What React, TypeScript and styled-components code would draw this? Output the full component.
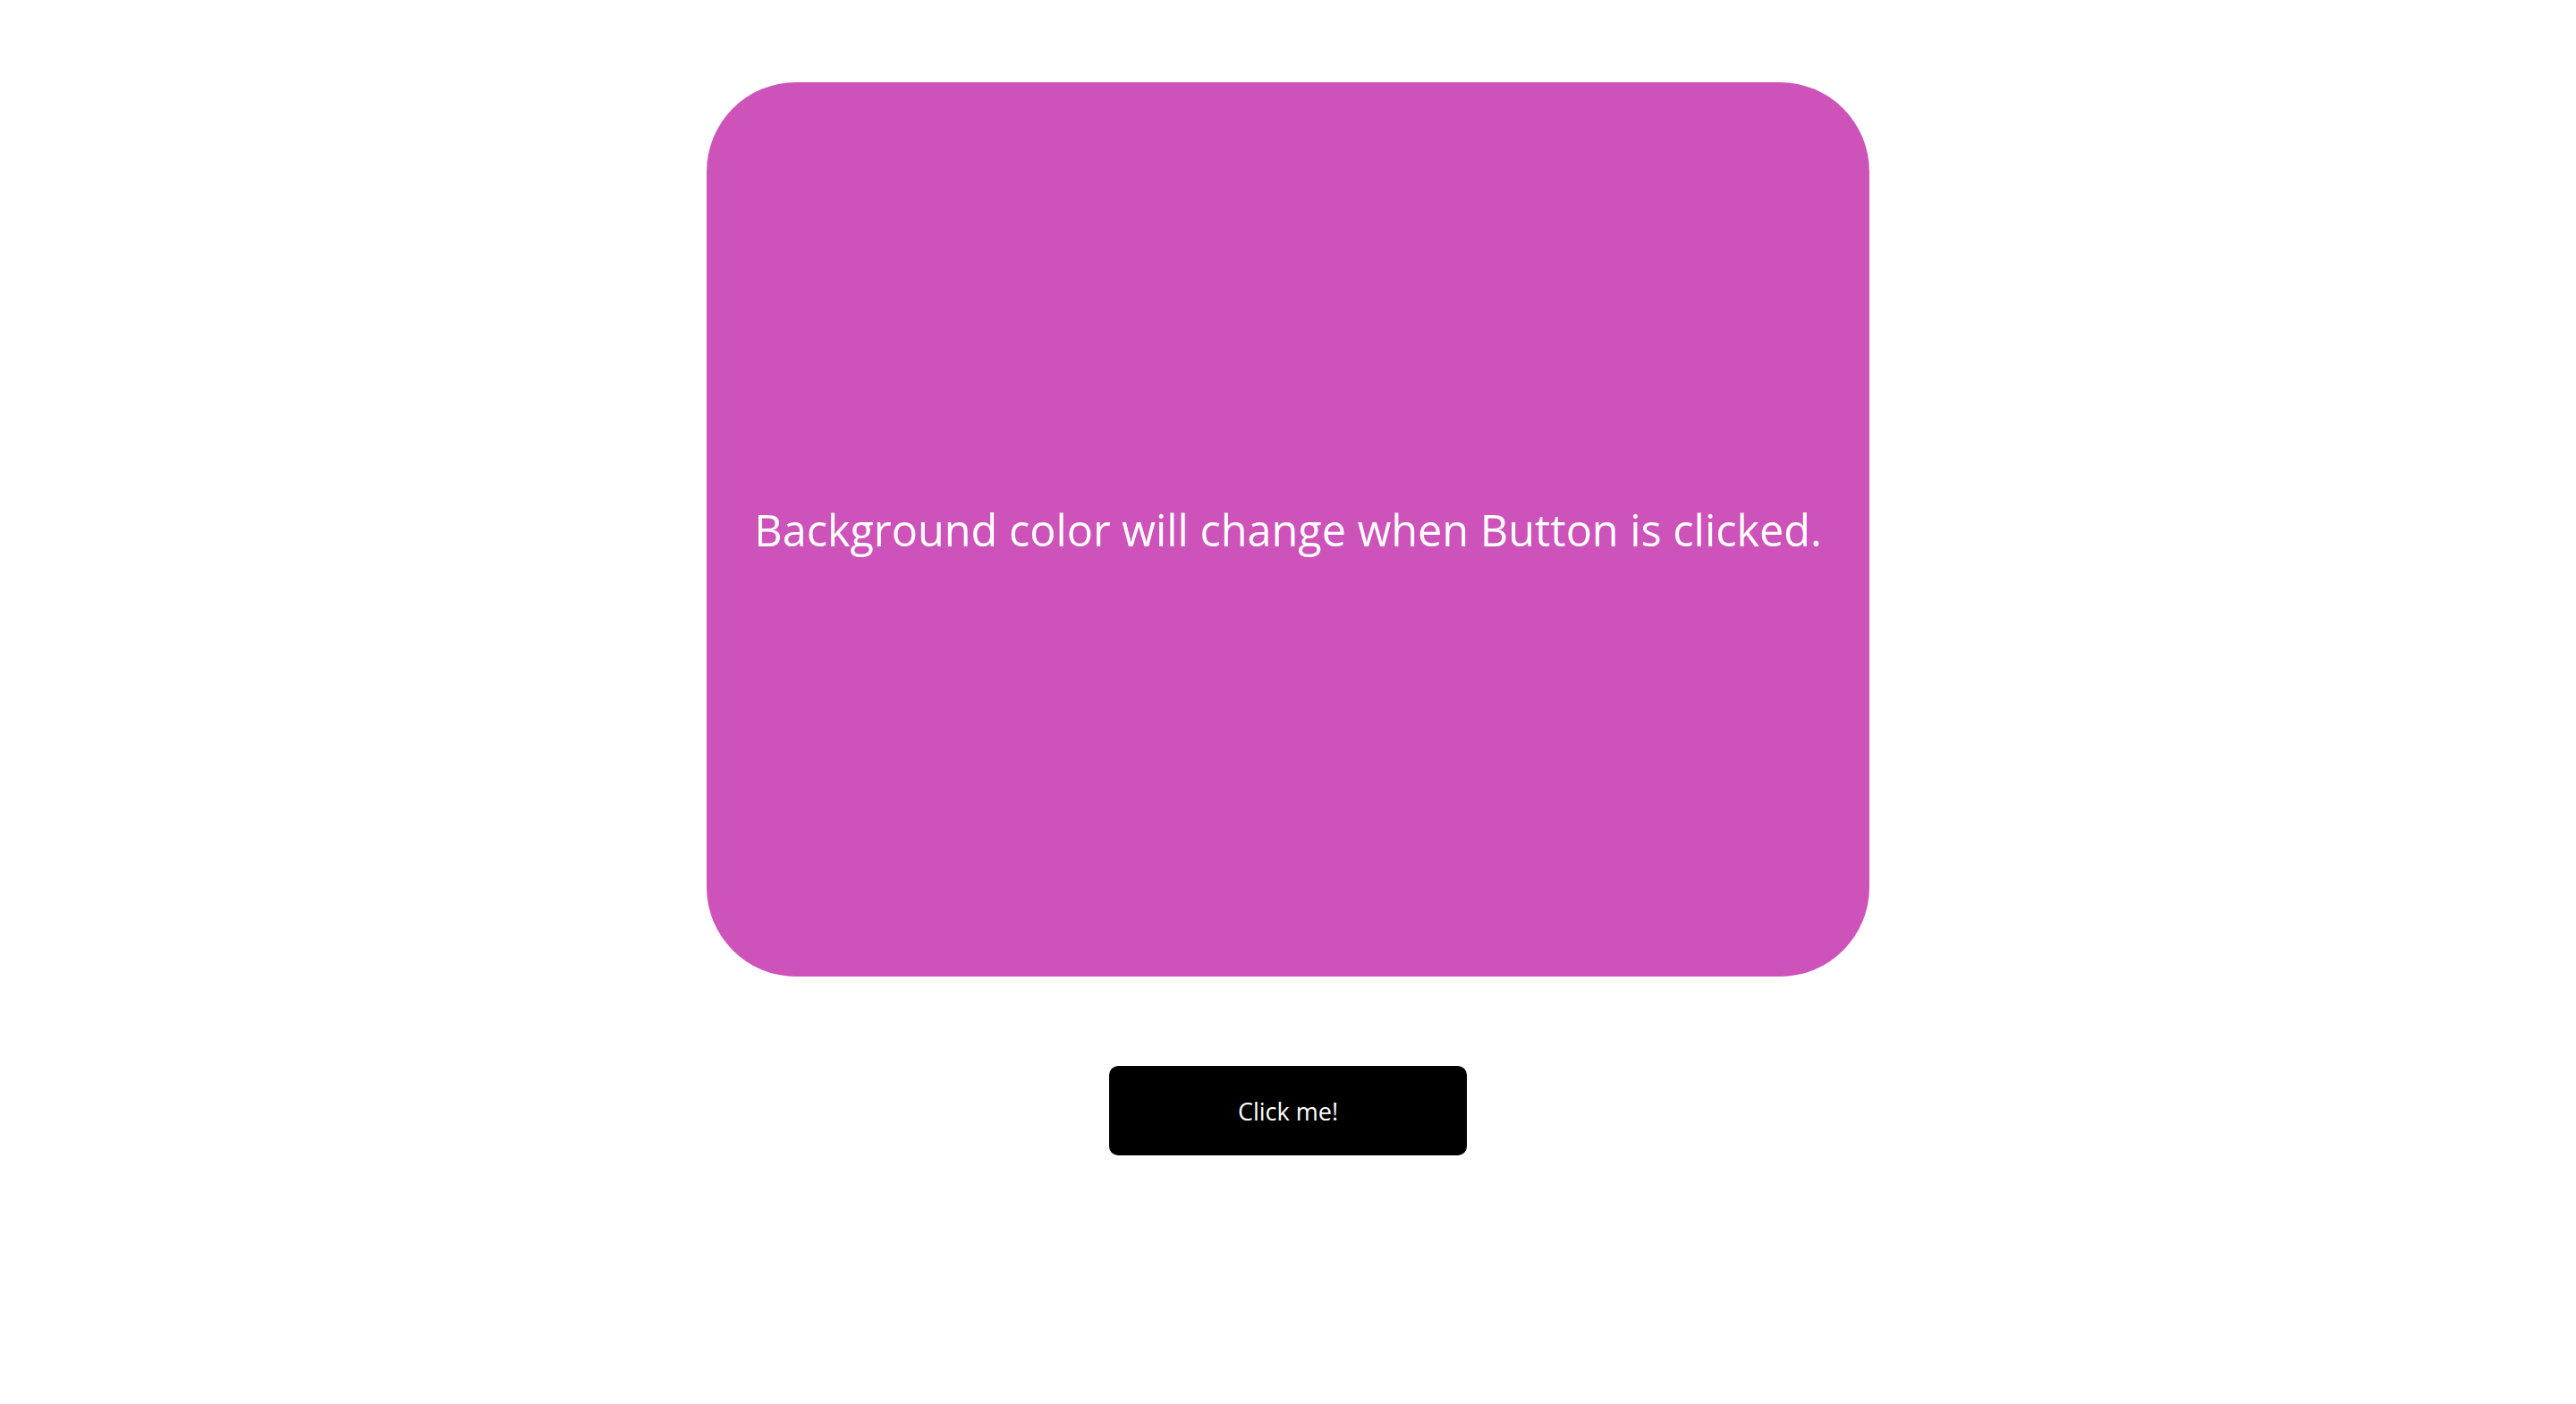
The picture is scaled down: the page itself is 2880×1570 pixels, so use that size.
import React, { useState } from "react";
import styled, { createGlobalStyle } from "styled-components";

const Global = createGlobalStyle`
  html, body { margin: 0; padding: 0; background: #ffffff; }
  body { font-family: "Open Sans", "DejaVu Sans", sans-serif; }
`;

const Page = styled.main`
  display: flex;
  flex-direction: column;
  align-items: center;
  gap: 100px;
  padding-top: 92px;
`;

const Card = styled.section<{ $bg: string }>`
  width: 1300px;
  height: 1000px;
  border-radius: 100px;
  background: ${(p) => p.$bg};
  display: flex;
  align-items: center;
  justify-content: center;
`;

const Message = styled.h1`
  margin: 0;
  color: #ffffff;
  font-family: "Open Sans", sans-serif;
  font-weight: 400;
  font-size: 48.6px;
  letter-spacing: 0;
`;

const Button = styled.button`
  width: 400px;
  height: 100px;
  border: none;
  border-radius: 10px;
  background: #000000;
  color: #ffffff;
  font-family: "Open Sans", sans-serif;
  font-weight: 400;
  font-size: 27px;
  cursor: pointer;
`;

const colors = ["#cd53bb", "#3b82f6", "#10b981", "#f59e0b", "#ef4444"];

export default function App() {
  const [i, setI] = useState(0);
  return (
    <>
      <Global />
      <Page>
        <Card $bg={colors[i]}>
          <Message>Background color will change when Button is clicked.</Message>
        </Card>
        <Button onClick={() => setI((i + 1) % colors.length)}>Click me!</Button>
      </Page>
    </>
  );
}
